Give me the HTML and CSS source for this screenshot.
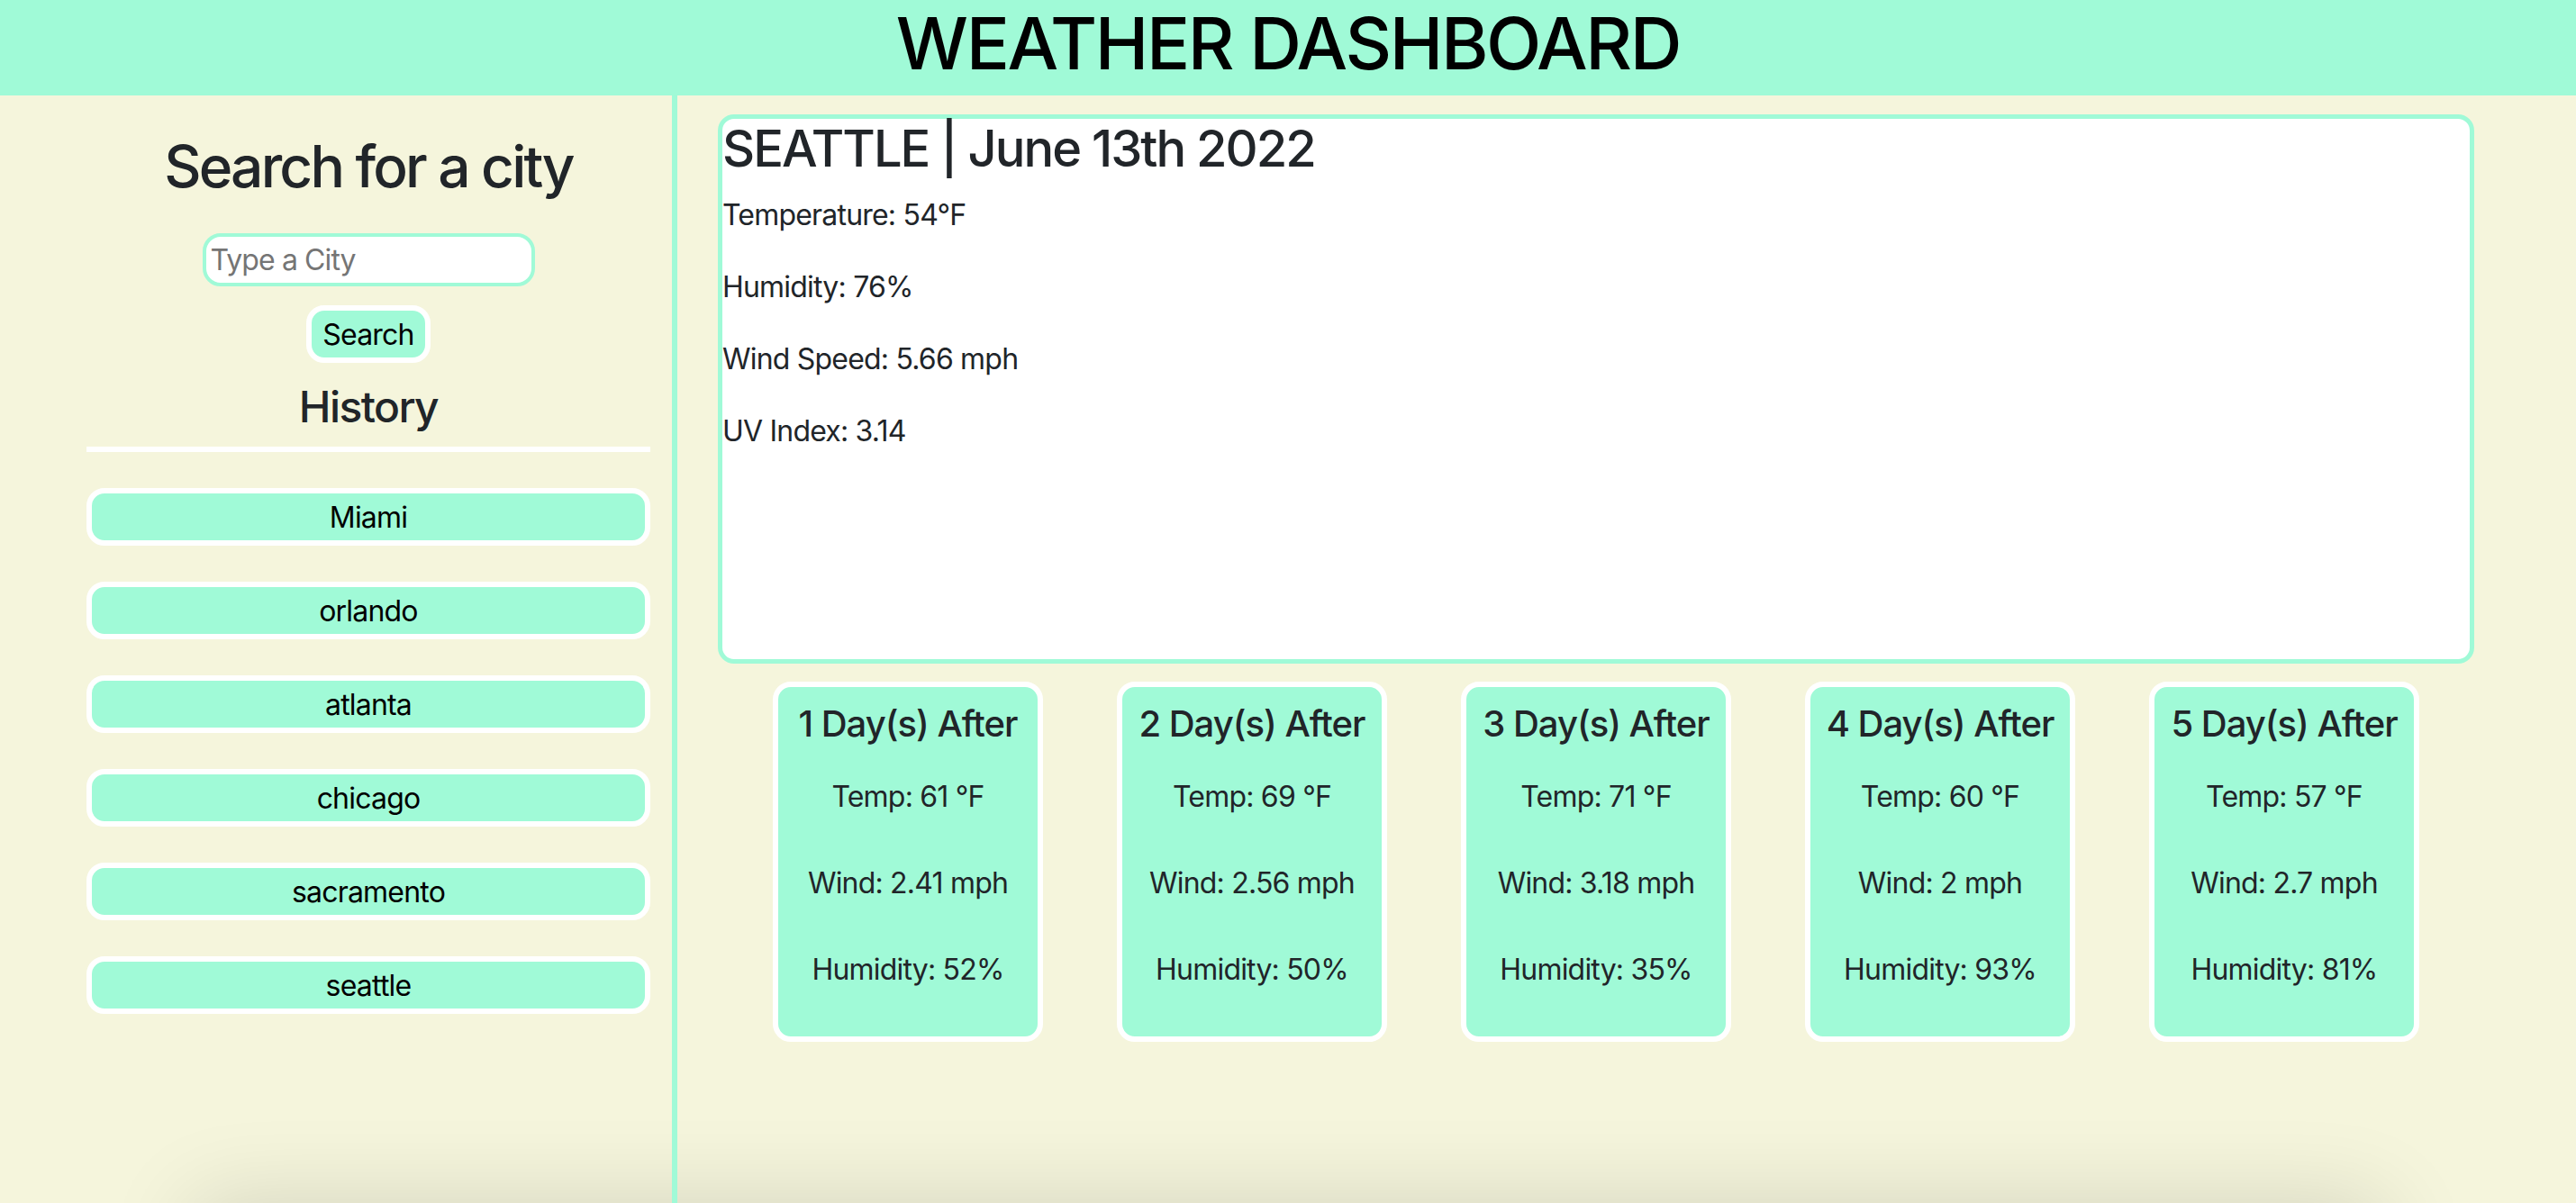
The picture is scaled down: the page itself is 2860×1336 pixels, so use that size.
FILE: index.html
```html
<!DOCTYPE html>
<html lang="en">
<head>
<meta charset="utf-8">
<title>Weather Dashboard</title>
<link rel="stylesheet" href="styles.css">
</head>
<body>
<header class="top">
  <h1 class="title">WEATHER DASHBOARD</h1>
</header>
<div class="layout">
  <aside class="sidebar">
    <h2 class="search-title">Search for a city</h2>
    <input class="city-input" type="text" placeholder="Type a City">
    <button class="search-btn" type="button">Search</button>
    <h4 class="history-title">History</h4>
    <hr class="history-rule">
    <div class="history-list">
      <button class="history-btn" type="button">Miami</button>
      <button class="history-btn" type="button">orlando</button>
      <button class="history-btn" type="button">atlanta</button>
      <button class="history-btn" type="button">chicago</button>
      <button class="history-btn" type="button">sacramento</button>
      <button class="history-btn" type="button">seattle</button>
    </div>
  </aside>
  <main class="main">
    <section class="current">
      <h3 class="current-title">SEATTLE | June 13th 2022</h3>
      <p class="current-stat">Temperature: 54°F</p>
      <p class="current-stat">Humidity: 76%</p>
      <p class="current-stat">Wind Speed: 5.66 mph</p>
      <p class="current-stat">UV Index: 3.14</p>
    </section>
    <div class="forecast">
      <div class="card">
        <h5 class="card-title">1 Day(s) After</h5>
        <p class="card-stat">Temp: 61 °F</p>
        <p class="card-stat">Wind: 2.41 mph</p>
        <p class="card-stat">Humidity: 52%</p>
      </div>
      <div class="card">
        <h5 class="card-title">2 Day(s) After</h5>
        <p class="card-stat">Temp: 69 °F</p>
        <p class="card-stat">Wind: 2.56 mph</p>
        <p class="card-stat">Humidity: 50%</p>
      </div>
      <div class="card">
        <h5 class="card-title">3 Day(s) After</h5>
        <p class="card-stat">Temp: 71 °F</p>
        <p class="card-stat">Wind: 3.18 mph</p>
        <p class="card-stat">Humidity: 35%</p>
      </div>
      <div class="card">
        <h5 class="card-title">4 Day(s) After</h5>
        <p class="card-stat">Temp: 60 °F</p>
        <p class="card-stat">Wind: 2 mph</p>
        <p class="card-stat">Humidity: 93%</p>
      </div>
      <div class="card">
        <h5 class="card-title">5 Day(s) After</h5>
        <p class="card-stat">Temp: 57 °F</p>
        <p class="card-stat">Wind: 2.7 mph</p>
        <p class="card-stat">Humidity: 81%</p>
      </div>
    </div>
  </main>
</div>
<div class="page-foot"></div>
</body>
</html>
```
FILE: styles.css
```css
* { box-sizing: border-box; }

html, body {
  margin: 0;
  padding: 0;
}

body {
  background: #f5f5dc;
  font-family: "Inter", "Liberation Sans", sans-serif;
  color: #212529;
  letter-spacing: -0.8px;
}

.top {
  background: #a0fad7;
  height: 106px;
  text-align: center;
}

.title {
  margin: 0;
  font-size: 80px;
  line-height: 96px;
  font-weight: 500;
  letter-spacing: -2.4px;
  color: #000;
}

.layout {
  display: flex;
  min-height: calc(100vh - 106px);
}

.sidebar {
  width: 752px;
  flex: 0 0 752px;
  border-right: 6px solid #a0fad7;
  padding: 40px 24px 0 96px;
  display: flex;
  flex-direction: column;
  align-items: center;
}

.search-title {
  margin: 0;
  font-size: 64px;
  line-height: 77px;
  font-weight: 500;
  letter-spacing: -2.8px;
}

.city-input {
  margin-top: 36px;
  width: 369px;
  height: 59px;
  border: 4px solid #a0fad7;
  border-radius: 20px;
  background: #fff;
  padding: 0 5px;
  font-family: inherit;
  font-size: 32px;
  letter-spacing: -0.9px;
  color: #212529;
  outline: none;
}

.city-input::placeholder {
  color: #757575;
}

.search-btn {
  margin-top: 21px;
  width: 138px;
  height: 64px;
  border: 6px solid #fff;
  border-radius: 20px;
  background: #a0fad7;
  padding: 0;
  font-family: inherit;
  font-size: 32px;
  letter-spacing: -0.8px;
  color: #000;
}

.history-title {
  margin: 20px 0 15px;
  font-size: 48px;
  line-height: 58px;
  font-weight: 500;
  letter-spacing: -1.6px;
}

.history-rule {
  width: 100%;
  height: 6px;
  margin: 0;
  border: 0;
  background: #fff;
}

.history-list {
  width: 100%;
  margin-top: 40px;
  display: flex;
  flex-direction: column;
  gap: 40px;
}

.history-btn {
  width: 100%;
  height: 64px;
  border: 6px solid #fff;
  border-radius: 20px;
  background: #a0fad7;
  padding: 0;
  font-family: inherit;
  font-size: 32px;
  letter-spacing: -0.8px;
  color: #000;
}

.main {
  flex: 1;
  padding: 21px 113px 0 45px;
}

.current {
  height: 610px;
  background: #fff;
  border: 5px solid #a0fad7;
  border-radius: 18px;
  padding: 0;
}

.current-title {
  margin: 0 0 16px;
  font-size: 56px;
  line-height: 67px;
  font-weight: 500;
  letter-spacing: -2px;
}

.current-stat {
  margin: 0 0 32px;
  font-size: 32px;
  line-height: 48px;
}

.forecast {
  margin-top: 20px;
  display: flex;
  justify-content: center;
  gap: 82px;
}

.card {
  width: 300px;
  height: 400px;
  background: #a0fad7;
  border: 6px solid #fff;
  border-radius: 20px;
  padding-top: 17px;
  text-align: center;
}

.card-title {
  margin: 0 0 33px;
  font-size: 40px;
  line-height: 48px;
  font-weight: 500;
  letter-spacing: -1px;
}

.card-stat {
  margin: 0;
  font-size: 32px;
  line-height: 48px;
}

.card-stat + .card-stat {
  margin-top: 48px;
}

.page-foot {
  width: 85%;
  height: 120px;
  margin: 0 auto;
  box-shadow: 0 0 100px rgba(0, 0, 0, 0.14);
}
```
